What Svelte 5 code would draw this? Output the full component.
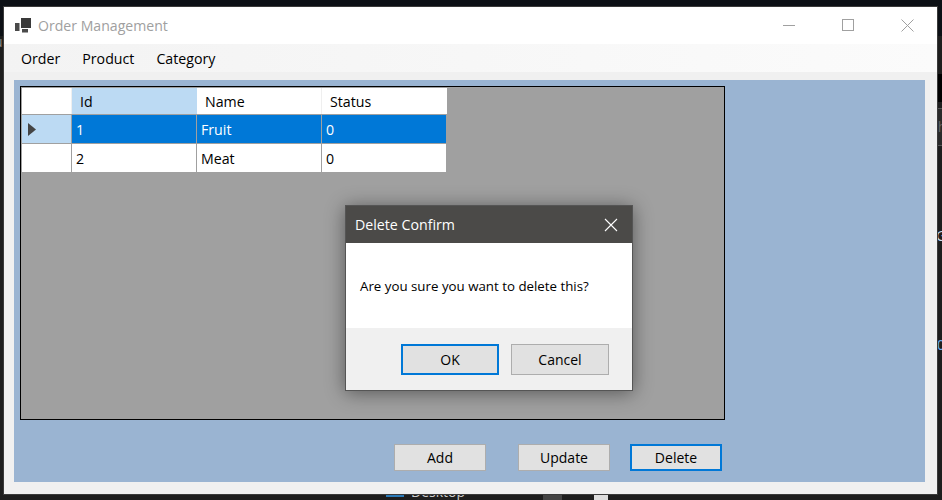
<script lang="ts">
	const columns = [
		{ label: 'Id', key: 'id' },
		{ label: 'Name', key: 'name' },
		{ label: 'Status', key: 'status' }
	];

	const rows = [
		{ id: '1', name: 'Fruit', status: '0', selected: true },
		{ id: '2', name: 'Meat', status: '0', selected: false }
	];

	const menuItems = ['Order', 'Product', 'Category'];
</script>

<div class="desktop">
	<!-- bits of the IDE and taskbar showing behind the window -->
	<div class="behind" aria-hidden="true">
		<div class="side-black"></div>
		<div class="side-tab"></div>
		<span class="peek peek-ch">ch</span>
		<span class="peek peek-g">G</span>
		<span class="peek peek-o">0</span>
		<span class="peek peek-u">u</span>
		<div class="tb-icon"></div>
		<span class="tb-label">Desktop</span>
		<div class="tb-block"></div>
		<div class="tb-file"></div>
	</div>

	<div class="window">
		<header class="titlebar">
			<svg class="app-icon" width="16" height="15" viewBox="0 0 16 15" aria-hidden="true">
				<rect x="0" y="5" width="4.5" height="8" fill="#4a4a4a" />
				<rect x="6" y="0" width="10" height="10" fill="#3a3a3a" />
				<rect x="7" y="11" width="6" height="3.5" fill="#4a4a4a" />
			</svg>
			<span class="title">Order Management</span>
			<div class="window-controls">
				<svg width="13" height="13" viewBox="0 0 13 13" aria-hidden="true">
					<path d="M0 6.5h12" stroke="#a0a0a0" fill="none" />
				</svg>
				<svg width="13" height="13" viewBox="0 0 13 13" aria-hidden="true">
					<rect x="0.5" y="0.5" width="11" height="11" stroke="#a0a0a0" fill="none" />
				</svg>
				<svg width="13" height="13" viewBox="0 0 13 13" aria-hidden="true">
					<path d="M0.5 0.5l12 12M12.5 0.5l-12 12" stroke="#a0a0a0" fill="none" />
				</svg>
			</div>
		</header>

		<nav class="menubar">
			{#each menuItems as item}
				<span class="menu-item">{item}</span>
			{/each}
		</nav>

		<main class="content">
			<div class="grid">
				<div class="grid-row header-row">
					<div class="row-head"></div>
					{#each columns as col, i}
						<div class="cell head" class:active={i === 0}>{col.label}</div>
					{/each}
				</div>
				{#each rows as row}
					<div class="grid-row data-row" class:selected={row.selected}>
						<div class="row-head">
							{#if row.selected}
								<svg width="8" height="13" viewBox="0 0 8 13" aria-hidden="true">
									<path d="M0 0l8 6.5-8 6.5z" fill="#444" />
								</svg>
							{/if}
						</div>
						{#each columns as col}
							<div class="cell">{row[col.key]}</div>
						{/each}
					</div>
				{/each}
			</div>

			<div class="actions">
				<button class="btn" type="button">Add</button>
				<button class="btn" type="button">Update</button>
				<button class="btn focused" type="button">Delete</button>
			</div>

			<div class="dialog" role="dialog" aria-label="Delete Confirm">
				<div class="dialog-title">
					<span>Delete Confirm</span>
					<svg width="14" height="14" viewBox="0 0 14 14" aria-hidden="true">
						<path d="M1 1l12 12M13 1L1 13" stroke="#fff" stroke-width="1.1" fill="none" />
					</svg>
				</div>
				<div class="dialog-body">Are you sure you want to delete this?</div>
				<div class="dialog-footer">
					<button class="btn dlg-btn focused" type="button">OK</button>
					<button class="btn dlg-btn" type="button">Cancel</button>
				</div>
			</div>
		</main>
	</div>
</div>

<style>
	:global(body) {
		margin: 0;
		background: #1c1c1c;
	}

	.desktop {
		position: relative;
		width: 942px;
		height: 500px;
		box-sizing: border-box;
		padding: 7px 5px 6px 4px;
		background: linear-gradient(#0c1015 0 36px, #1e1e1e 36px);
		font-family: 'Open Sans', 'Noto Sans', sans-serif;
		overflow: hidden;
	}

	.behind {
		position: absolute;
		inset: 0;
		font-size: 14px;
		color: #ddd;
	}

	.side-black {
		position: absolute;
		left: 937px;
		top: 74px;
		width: 5px;
		height: 28px;
		background: #000;
	}

	.side-tab {
		position: absolute;
		left: 937px;
		top: 108px;
		width: 5px;
		height: 38px;
		box-sizing: border-box;
		border-top: 1px solid #555;
		border-bottom: 1px solid #555;
		background: #2a2a2a;
	}

	.peek {
		position: absolute;
		line-height: 1;
	}

	.peek-ch {
		left: 931px;
		top: 120px;
		color: #666;
	}

	.peek-g {
		left: 936px;
		top: 229px;
		color: #cde;
	}

	.peek-o {
		left: 937px;
		top: 338px;
		color: #6ab0f0;
	}

	.peek-u {
		left: -6px;
		top: 35px;
		color: #888;
	}

	.tb-icon {
		position: absolute;
		left: 386px;
		top: 480px;
		width: 18px;
		height: 17px;
		background: #2a7ab8;
	}

	.tb-label {
		position: absolute;
		left: 411px;
		top: 484px;
		color: #ccc;
		line-height: 1.1;
	}

	.tb-block {
		position: absolute;
		left: 543px;
		top: 490px;
		width: 19px;
		height: 10px;
		background: #444;
	}

	.tb-file {
		position: absolute;
		left: 594px;
		top: 495px;
		width: 14px;
		height: 5px;
		background: #ddd;
	}

	.window {
		position: relative;
		height: 100%;
		display: flex;
		flex-direction: column;
		background: #f0f0f0;
		box-shadow: 0 0 0 1px #3a3a3a;
	}

	.titlebar {
		height: 37px;
		flex: none;
		display: flex;
		align-items: center;
		padding-left: 11px;
		background: #fff;
	}

	.app-icon {
		margin-right: 7px;
	}

	.title {
		font-size: 14.1px;
		color: #a0a0a0;
	}

	.window-controls {
		margin-left: auto;
		display: flex;
		align-items: center;
		gap: 46px;
		padding-right: 23px;
	}

	.menubar {
		height: 28px;
		flex: none;
		display: flex;
		align-items: center;
		gap: 22px;
		padding-left: 17px;
		background: linear-gradient(90deg, #f3f3f3, #fbfbfb);
		font-size: 14.2px;
		color: #000;
	}

	.content {
		position: relative;
		flex: 1;
		margin: 8px 12px 12px 10px;
		padding: 6px;
		background: #9ab4d2;
		display: flex;
		flex-direction: column;
	}

	.grid {
		width: 705px;
		height: 334px;
		box-sizing: border-box;
		padding: 1px;
		border: 1px solid #000;
		background: #a0a0a0;
		display: flex;
		flex-direction: column;
		gap: 1px;
	}

	.grid-row {
		display: grid;
		grid-template-columns: 49px 124px 124px 124px;
		column-gap: 1px;
		width: 424px;
		height: 28px;
		font-size: 14.2px;
		color: #000;
	}

	.header-row {
		width: 425px;
		height: 26px;
		grid-template-columns: 49px 124px 124px 125px;
		background: #efefef;
	}

	.row-head {
		display: flex;
		align-items: center;
		padding-left: 6px;
		box-sizing: border-box;
		background: #fff;
	}

	.cell {
		display: flex;
		align-items: center;
		padding-left: 4px;
		box-sizing: border-box;
		background: #fff;
	}

	.head {
		padding-left: 8px;
	}

	.head.active {
		background: #bcdaf3;
		box-shadow: 1px 0 0 #bcdaf3;
	}

	.selected .cell {
		background: #0078d7;
		color: #fff;
	}

	.selected .row-head {
		background: #bcdaf3;
	}

	.actions {
		display: flex;
		justify-content: flex-end;
		gap: 32px;
		margin-top: 24px;
		padding-right: 197px;
	}

	.btn {
		width: 92px;
		height: 27px;
		box-sizing: border-box;
		padding: 0;
		border: 1px solid #adadad;
		background: #e1e1e1;
		font-family: inherit;
		font-size: 14px;
		color: #000;
	}

	.btn.focused {
		border: 2px solid #0078d7;
	}

	.actions .btn.focused {
		margin-left: -12px;
	}

	.dialog {
		position: absolute;
		left: 331px;
		top: 125px;
		width: 288px;
		height: 186px;
		box-sizing: border-box;
		display: flex;
		flex-direction: column;
		border: 1px solid #555;
		background: #f0f0f0;
		box-shadow: 0 2px 18px rgba(0, 0, 0, 0.45);
	}

	.dialog-title {
		height: 37px;
		flex: none;
		display: flex;
		align-items: center;
		justify-content: space-between;
		padding: 0 14px 0 9px;
		background: #4b4a48;
		font-size: 14.2px;
		color: #fff;
	}

	.dialog-body {
		height: 85px;
		flex: none;
		display: flex;
		align-items: center;
		padding-left: 14px;
		background: #fff;
		font-size: 13.3px;
		color: #000;
	}

	.dialog-footer {
		flex: 1;
		display: flex;
		gap: 12px;
		padding: 16px 0 0 55px;
	}

	.dlg-btn {
		width: 98px;
		height: 31px;
	}
</style>
